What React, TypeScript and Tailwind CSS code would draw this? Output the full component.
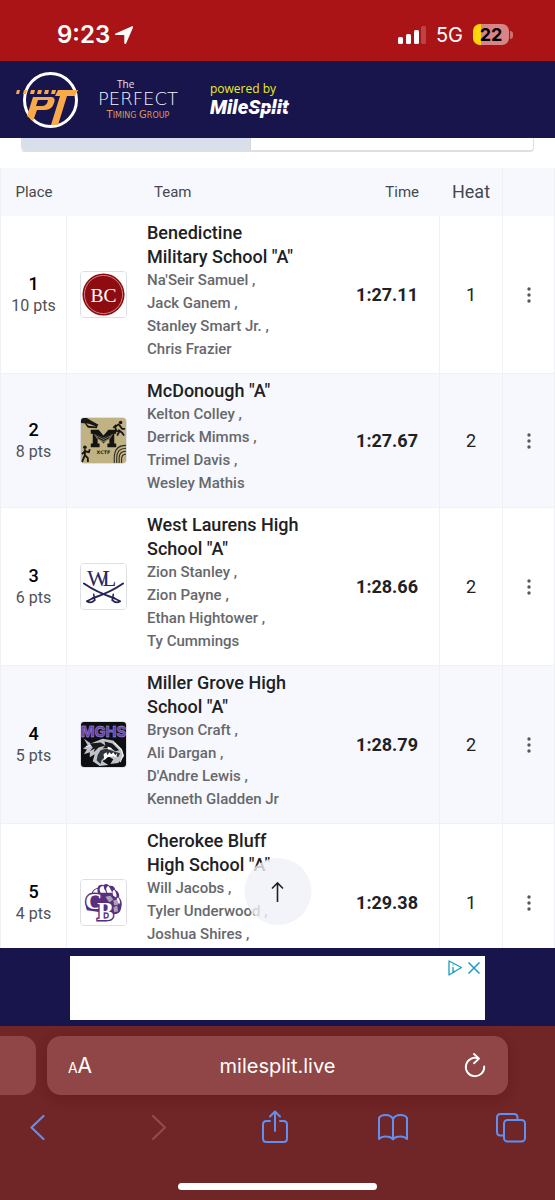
import React from "react";

type Result = {
  place: number;
  points: number;
  team: string;
  runners: string[];
  time: string;
  heat: number;
  logo: React.ReactNode;
};

function BenedictineLogo() {
  return (
    <svg viewBox="0 0 46 46" className="size-full" role="img" aria-label="Benedictine">
      <rect width="46" height="46" fill="#fff" />
      <circle cx="23" cy="23" r="21.5" fill="#8e0b10" />
      <circle cx="23" cy="23" r="19.5" fill="none" stroke="#d8a3a3" strokeWidth="0.8" />
      <text x="23" y="31" textAnchor="middle" fontFamily="Liberation Serif, serif" fontSize="20" fill="#fff">
        BC
      </text>
    </svg>
  );
}

function McDonoughLogo() {
  return (
    <svg viewBox="0 0 46 46" className="size-full" role="img" aria-label="McDonough">
      <rect width="46" height="46" fill="#c0b283" />
      <path d="M0 0h6l5 3 7 4-2 2L8 6 0 5zM2 3l6 5 9 1-1 1.500L7 10z" fill="#191713" />
      <circle cx="40.500" cy="4.500" r="1.800" fill="#191713" />
      <path d="M39 6l-4 3 1 4 3 1-2 4M39 7l3 4 3 0M36 7l-3 3M38 12l4 3 2 3" fill="none" stroke="#191713" strokeWidth="1.800" />
      <circle cx="4" cy="30" r="1.800" fill="#191713" />
      <path d="M4 32v6l-3 7M4 38l3 3 0 4M4 34l4 1 1-3M4 34l-3 3" fill="none" stroke="#191713" strokeWidth="1.900" />
      <path d="M10 12h8l5 6 5-6h8v4h-2v10h2v4h-9v-4h2v-7l-6 7-6-7v7h2v4H10v-4h2V16h-2z" fill="#141412" />
      <path d="M13 16l10 4 10-4-3 5-7 4-7-4z" fill="#746d56" />
      <path d="M15 17l8 4 8-4M17 20l6 3 6-3" fill="none" stroke="#1b1a16" strokeWidth="1" />
      <text x="23" y="37" textAnchor="middle" fontFamily="DejaVu Sans, sans-serif" fontWeight="700" fontSize="5" fill="#26221a">
        XCTF
      </text>
      <g fill="none" stroke="#2e2a20" strokeWidth="1.100">
        <path d="M34 46v-5q0-13 12-13" />
        <path d="M36.500 46v-5q0-10 9.500-10" />
        <path d="M39 46v-5q0-7 7-7" />
        <path d="M41.500 46v-4q0-5 4.500-5" />
      </g>
    </svg>
  );
}

function WestLaurensLogo() {
  return (
    <svg viewBox="0 0 46 46" className="size-full" role="img" aria-label="West Laurens">
      <rect width="46" height="46" fill="#fff" />
      <text x="17" y="22" textAnchor="middle" fontFamily="Liberation Serif, serif" fontSize="23" fill="#29285d">
        W
      </text>
      <text x="29" y="22" textAnchor="middle" fontFamily="Liberation Serif, serif" fontSize="23" fill="#29285d">
        L
      </text>
      <g fill="none" stroke="#262359" strokeLinecap="round">
        <path d="M3 20Q16 29 34 35" strokeWidth="2" />
        <path d="M43 20Q30 29 12 35" strokeWidth="2" />
        <path d="M33 31l-1 6M13 31l1 6" strokeWidth="1.600" />
        <path d="M34 35l6 3M12 35l-6 3M32 37q4 4 8 1M14 37q-4 4-8 1" strokeWidth="1.800" />
      </g>
    </svg>
  );
}

function MillerGroveLogo() {
  return (
    <svg viewBox="0 0 46 46" className="size-full" role="img" aria-label="Miller Grove">
      <rect width="46" height="46" fill="#0e0f12" />
      <text x="23" y="15" textAnchor="middle" fontFamily="Inter, sans-serif" fontWeight="800" fontSize="15" fill="#6541b5" stroke="#b9acd8" strokeWidth="0.400">
        MGHS
      </text>
      <path d="M3 17l7 5 12-5 11 2 9 9 2 7-6 7-8 1 3-5-5-3-6 5 6 4-9 1-7-5 2-7-5 3 0-5-6 2 3-5-4-1 5-3z" fill="#bfc2c7" />
      <path d="M9 22l11-1 5 3-7 2-5 5 1-4-5 3 3-4zM24 20l8 2 7 7-4 1-5-4-8 1 3-3z" fill="#17191d" />
      <path d="M20 29l6-2 7 3 7 2-2 4-6-3-6 1-5 5-1 4-4-4 1-5z" fill="#30343b" />
      <path d="M27 25l5 2-4 1zM23 33l3-2 1 3 2-3 2 2 2-2 2 3 2-2-1 4-3-1-6 1-3 3z" fill="#fff" />
      <path d="M34 21l7 7 2 6-3 7M5 25l5-1" fill="none" stroke="#f0f0f0" strokeWidth="1.200" />
    </svg>
  );
}

function CherokeeBluffLogo() {
  return (
    <svg viewBox="0 0 46 46" className="size-full" role="img" aria-label="Cherokee Bluff">
      <rect width="46" height="46" fill="#fff" />
      <path d="M6 31Q2 19 11 16q-1-6 6-8 1-4 6-3 4-2 6 1 5-1 6 4 5 3 4 8 4 4 2 11-1 6-7 6z" fill="#56307f" />
      <g fill="#fff">
        <path d="M12 15q0-5 5-6-1 3 2 7zM20 13q-3-6 3-7 0 3 3 7zM27 13q-3-5 1-7 2 3 4 7zM33 16q-2-5 1-6 3 4 2 8zM37 22q-1-4 1-4 3 4 1 7z" />
      </g>
      <g fill="#aaa3b5">
        <path d="M25 17l5-1 3 4-4 3zM33 21l4-1 1 5-4 1zM33 28l4-2 1 6-4 1zM14 17q4-3 8 0z" />
      </g>
      <text x="13" y="30" textAnchor="middle" fontFamily="Liberation Serif, serif" fontWeight="700" fontSize="24" fill="#fff" stroke="#56307f" strokeWidth="3" paintOrder="stroke">
        C
      </text>
      <text x="25" y="41" textAnchor="middle" fontFamily="Liberation Serif, serif" fontWeight="700" fontSize="25" fill="#fff" stroke="#56307f" strokeWidth="3" paintOrder="stroke">
        B
      </text>
    </svg>
  );
}

const results: Result[] = [
  {
    place: 1,
    points: 10,
    team: 'Benedictine Military School "A"',
    runners: ["Na'Seir Samuel ,", "Jack Ganem ,", "Stanley Smart Jr. ,", "Chris Frazier"],
    time: "1:27.11",
    heat: 1,
    logo: <BenedictineLogo />,
  },
  {
    place: 2,
    points: 8,
    team: 'McDonough "A"',
    runners: ["Kelton Colley ,", "Derrick Mimms ,", "Trimel Davis ,", "Wesley Mathis"],
    time: "1:27.67",
    heat: 2,
    logo: <McDonoughLogo />,
  },
  {
    place: 3,
    points: 6,
    team: 'West Laurens High School "A"',
    runners: ["Zion Stanley ,", "Zion Payne ,", "Ethan Hightower ,", "Ty Cummings"],
    time: "1:28.66",
    heat: 2,
    logo: <WestLaurensLogo />,
  },
  {
    place: 4,
    points: 5,
    team: 'Miller Grove High School "A"',
    runners: ["Bryson Craft ,", "Ali Dargan ,", "D'Andre Lewis ,", "Kenneth Gladden Jr"],
    time: "1:28.79",
    heat: 2,
    logo: <MillerGroveLogo />,
  },
  {
    place: 5,
    points: 4,
    team: 'Cherokee Bluff High School "A"',
    runners: ["Will Jacobs ,", "Tyler Underwood ,", "Joshua Shires ,"],
    time: "1:29.38",
    heat: 1,
    logo: <CherokeeBluffLogo />,
  },
];

function StatusBar() {
  return (
    <div className="flex h-[61px] shrink-0 items-center justify-between bg-[#ab1416] pt-2 pr-[42px] pl-[57px] font-['Inter',sans-serif] text-white">
      <div className="flex items-center gap-1">
        <span className="text-2xl font-semibold">9:23</span>
        <svg viewBox="0 0 20 20" className="size-5" fill="currentColor" aria-hidden="true">
          <path d="M18 1.200Q19.500 1 19 2.500L12.200 18.200Q11 20 10.300 18V10.600Q10.300 10 9.600 10H2Q0 9.600 1.600 8.500z" />
        </svg>
      </div>
      <div className="flex items-center">
        <svg viewBox="0 0 28 20" className="h-5 w-7" fill="currentColor" aria-hidden="true">
          <rect x="0" y="12" width="5" height="7" rx="1.500" />
          <rect x="8" y="9" width="5" height="10" rx="1.500" />
          <rect x="16" y="5" width="5" height="14" rx="1.500" />
          <rect x="23" y="1" width="5" height="18" rx="1.500" opacity="0.200" />
        </svg>
        <span className="ml-2.5 text-xl">5G</span>
        <div className="ml-2.5 flex items-center gap-px">
          <div className="flex h-[21px] w-9 items-center justify-center rounded-[7px] bg-linear-to-r from-[#ffd60a] from-22% to-[#d98587] to-22% text-lg leading-none font-bold text-black">
            22
          </div>
          <div className="h-2 w-[3px] rounded-r-full bg-[#d07072]" />
        </div>
      </div>
    </div>
  );
}

function SiteHeader() {
  return (
    <header className="flex h-[77px] shrink-0 items-center bg-[#18154c] pl-4">
      <svg viewBox="0 0 184 60" className="h-[60px] w-[184px]" role="img" aria-label="The Perfect Timing Group">
        <ellipse cx="34.500" cy="30" rx="26" ry="26.500" fill="none" stroke="#fff" strokeWidth="3" />
        <g fill="#f9a94a">
          <path d="M1 20h3l-1 4H0zM8 20h3l-1 4H7zM15 20h4l-1 4h-4zM22 20h4l-1 4h-4zM29 20h4l-1 4h-4zM36 20h4l-1 4h-4z" />
          <path d="M42 20h20l-3 6h-8l-9 29h-7l9-29h-5z" />
          <path fillRule="evenodd" d="M17 27h19q4 1 2 6-2 7-9 7h-8l-4 11-6-5zm5 3l-2 6h6q5 0 6-6z" />
        </g>
        <text x="101" y="18" fontFamily="Open Sans, sans-serif" fontSize="10" fill="#e5e4ec">
          The
        </text>
        <text x="122" y="35" textAnchor="middle" fontFamily="DejaVu Sans, sans-serif" fontSize="18" fontWeight="200" fill="#f5f3ff">
          PERFECT
        </text>
        <text x="122" y="48" textAnchor="middle" fontFamily="DejaVu Sans, sans-serif" fill="#dc9a57" fontSize="8">
          <tspan fontSize="10">T</tspan>IMING <tspan fontSize="10">G</tspan>ROUP
        </text>
      </svg>
      <div className="ml-2.5 flex flex-col">
        <span className="font-['Open_Sans',sans-serif] text-xs leading-4 text-[#e8ee1c]">powered by</span>
        <svg viewBox="0 0 84 22" className="h-[22px] w-[84px]" role="img" aria-label="MileSplit">
          <text x="0" y="17" fontFamily="Roboto, sans-serif" fontSize="20" fontWeight="900" fontStyle="italic" fill="#fff">
            MileSplit
          </text>
          <path d="M40 11.500h44" stroke="#18154c" strokeWidth="0.800" />
        </svg>
      </div>
    </header>
  );
}

function ResultsTable() {
  return (
    <table className="w-full table-fixed border-separate border-spacing-0 border-x border-[#f0f1f5] text-[#202124]">
      <colgroup>
        <col className="w-[66px]" />
        <col className="w-[72px]" />
        <col />
        <col className="w-[110px]" />
        <col className="w-[63px]" />
        <col className="w-[51px]" />
      </colgroup>
      <thead>
        <tr className="h-12 bg-[#f7f8fd] text-[15px] text-[#46484f] [&>th]:font-normal">
          <th>Place</th>
          <th colSpan={2} className="pl-[87px] text-left">
            Team
          </th>
          <th className="pr-[21px] text-right">Time</th>
          <th className="border-r border-[#f0f1f5] text-lg">Heat</th>
          <th aria-label="Actions" />
        </tr>
      </thead>
      <tbody>
        {results.map((r) => (
          <tr
            key={r.place}
            className="even:bg-[#f7f8fd] last:h-[158px] [&>td]:border-b [&>td]:border-[#f0f1f5]"
          >
            <td className="border-r text-center">
              <div className="text-lg leading-[22px] font-medium text-black">{r.place}</div>
              <div className="text-base leading-[22px] text-[#505258]">{r.points} pts</div>
            </td>
            <td className="pl-[13px]">
              <div className="size-[47px] overflow-hidden rounded-sm border border-[#dddfe4]">{r.logo}</div>
            </td>
            <td className="pt-[5px] pr-6 pb-3 pl-2 align-top">
              <div className="text-lg leading-6 font-medium">{r.team}</div>
              {r.runners.map((name) => (
                <div key={name} className="text-[15px] leading-[23px] font-medium text-[#66686c]">
                  {name}
                </div>
              ))}
            </td>
            <td className="border-r pr-[21px] text-right text-lg font-bold">{r.time}</td>
            <td className="border-r text-center text-lg">{r.heat}</td>
            <td className="text-center">
              <button type="button" aria-label={`More options for place ${r.place}`} className="align-middle">
                <svg viewBox="0 0 16 20" className="h-5 w-4" fill="#55575c" aria-hidden="true">
                  <circle cx="8" cy="4" r="1.700" />
                  <circle cx="8" cy="10" r="1.700" />
                  <circle cx="8" cy="16" r="1.700" />
                </svg>
              </button>
            </td>
          </tr>
        ))}
      </tbody>
    </table>
  );
}

function AdBanner() {
  return (
    <aside className="flex h-[78px] shrink-0 items-center justify-center bg-[#18154c] px-[70px] pb-1.5 pt-2">
      <div className="flex h-full w-full items-start justify-end gap-1 bg-white p-1">
        <button type="button" aria-label="About this ad">
          <svg viewBox="0 0 16 16" className="size-4" fill="none" stroke="#1a9cc0" strokeWidth="1.300" aria-hidden="true">
            <path d="M2 1l12.500 6.500L2 15z" strokeLinejoin="round" />
            <path d="M6 4.500v1M6 7v4.500h2" />
          </svg>
        </button>
        <button type="button" aria-label="Close ad">
          <svg viewBox="0 0 14 16" className="h-4 w-3.5" fill="none" stroke="#1a9cc0" strokeWidth="1.500" aria-hidden="true">
            <path d="M1.500 2.500l11 11M12.500 2.500l-11 11" />
          </svg>
        </button>
      </div>
    </aside>
  );
}

function BrowserBar() {
  return (
    <footer className="flex h-[174px] shrink-0 flex-col bg-[#702526] pt-2.5 font-['Inter',sans-serif] text-white">
      <div className="flex h-[59px] gap-[11px] pr-[47px]">
        <div className="w-9 shrink-0 rounded-r-[14px] bg-[#904646]" />
        <div className="grid flex-1 grid-cols-[40px_1fr_40px] items-center rounded-[14px] bg-[#904646] px-[13px] shadow-[0_4px_14px_rgba(60,0,0,0.2)]">
          <button type="button" aria-label="Page settings" className="flex items-baseline justify-center">
            <span className="text-sm">A</span>
            <span className="text-[21px]">A</span>
          </button>
          <a href="https://milesplit.live" className="text-center text-xl">
            milesplit.live
          </a>
          <button type="button" aria-label="Reload" className="flex justify-center">
            <svg viewBox="0 0 24 28" className="h-7 w-6" fill="none" stroke="currentColor" strokeWidth="1.900" strokeLinecap="round" strokeLinejoin="round" aria-hidden="true">
              <path d="M15.500 6.500A9.200 9.200 0 1 0 21.200 14.500" />
              <path d="M11 2l5 4.600-5 4.600" />
            </svg>
          </button>
        </div>
      </div>
      <nav className="mt-3.5 flex items-center justify-between pr-7 pl-[21px] text-[#5f90f2]" aria-label="Browser">
        <button type="button" aria-label="Back">
          <svg viewBox="0 0 32 36" className="h-9 w-8" fill="none" stroke="currentColor" strokeWidth="2.200" strokeLinecap="round" strokeLinejoin="round">
            <path d="M22.500 7L10.500 18.500 22.500 30" />
          </svg>
        </button>
        <button type="button" aria-label="Forward" disabled className="text-[#914c4a]">
          <svg viewBox="0 0 32 36" className="h-9 w-8" fill="none" stroke="currentColor" strokeWidth="2.200" strokeLinecap="round" strokeLinejoin="round">
            <path d="M13 7l12 11.500L13 30" />
          </svg>
        </button>
        <button type="button" aria-label="Share">
          <svg viewBox="0 0 32 36" className="h-9 w-8" fill="none" stroke="currentColor" strokeWidth="2" strokeLinecap="round" strokeLinejoin="round">
            <path d="M12 12H8.500Q5 12 5 15.500V29.500Q5 33 8.500 33H25.500Q29 33 29 29.500V15.500Q29 12 25.500 12H22M17 22V2.500M12 7.500l5-5 5 5" />
          </svg>
        </button>
        <button type="button" aria-label="Bookmarks">
          <svg viewBox="0 0 32 36" className="h-9 w-8" fill="none" stroke="currentColor" strokeWidth="2" strokeLinecap="round" strokeLinejoin="round">
            <path d="M16 10Q14 6 8.500 6 3.500 6 2 9V30Q5 27 9 27.500 14 27.500 16 30.500 18 27.500 23 27.500 27 27 30 30V9Q28.500 6 23.500 6 18 6 16 10zV30" />
          </svg>
        </button>
        <button type="button" aria-label="Tabs">
          <svg viewBox="0 0 32 36" className="h-9 w-8" fill="none" stroke="currentColor" strokeWidth="2" strokeLinecap="round" strokeLinejoin="round">
            <path d="M8 26.500H5.500Q2 26.500 2 23V8.500Q2 5 5.500 5H19Q22.500 5 22.500 8.500V10.500" />
            <rect x="9" y="11" width="21" height="21.500" rx="3.500" />
          </svg>
        </button>
      </nav>
      <div className="mx-auto mt-auto mb-2.5 h-[7px] w-[36%] rounded-full bg-white" />
    </footer>
  );
}

export default function App() {
  return (
    <div className="flex h-screen flex-col bg-white font-['Roboto',sans-serif]">
      <StatusBar />
      <SiteHeader />
      <div className="relative flex min-h-0 flex-1 flex-col">
        <main className="min-h-0 flex-1 overflow-hidden">
          <div className="mr-[21px] mb-4 ml-[21px] flex h-3.5 rounded-b-sm border-r border-b-2 border-[#dedfe3]">
            <div className="w-[45%] rounded-bl-sm border-r border-[#d5d8e2] bg-[#d9deed]" />
          </div>
          <ResultsTable />
        </main>
        <button
          type="button"
          aria-label="Back to top"
          className="absolute bottom-[23px] left-1/2 flex size-[67px] -translate-x-1/2 items-center justify-center rounded-full bg-[#f0f1f9]/80"
        >
          <svg viewBox="0 0 16 24" className="h-6 w-4" fill="none" stroke="#202124" strokeWidth="1.600" aria-hidden="true">
            <path d="M8 22V3M2.500 8.500L8 3l5.500 5.500" />
          </svg>
        </button>
      </div>
      <AdBanner />
      <BrowserBar />
    </div>
  );
}
